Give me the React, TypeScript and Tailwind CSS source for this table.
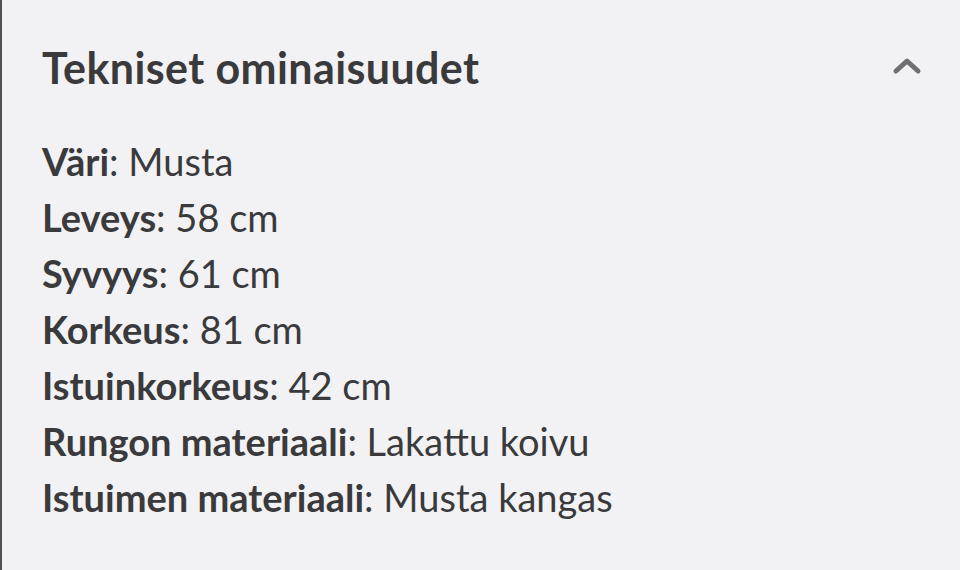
import React from "react";

const rows: [string, string][] = [
  ["Väri", "Musta"],
  ["Leveys", "58 cm"],
  ["Syvyys", "61 cm"],
  ["Korkeus", "81 cm"],
  ["Istuinkorkeus", "42 cm"],
  ["Rungon materiaali", "Lakattu koivu"],
  ["Istuimen materiaali", "Musta kangas"],
];

export default function App() {
  return (
    <div
      className="w-[960px] h-[570px] bg-[#f2f2f4] border-l-2 border-[#505050] text-[#3a3a3c] overflow-hidden"
      style={{ fontFamily: "Lato, 'Open Sans', sans-serif" }}
    >
      <div className="flex items-center justify-between pl-[40px] pr-[38px] pt-[38px] h-[96px]">
        <h2 className="text-[43px] font-bold leading-none tracking-[0.4px]">Tekniset ominaisuudet</h2>
        <svg width="30" height="20" viewBox="0 0 30 20" className="mb-[2px]">
          <path d="M4 15 L15 5 L26 15" fill="none" stroke="#707072" strokeWidth="5" strokeLinecap="round" strokeLinejoin="round" />
        </svg>
      </div>
      <div className="pl-[40px] pt-[37px] flex flex-col">
        {rows.map(([k, v]) => (
          <div key={k} className="text-[38px] leading-[56px] h-[56px]">
            <span className="font-bold">{k}</span>
            <span>: {v}</span>
          </div>
        ))}
      </div>
    </div>
  );
}
